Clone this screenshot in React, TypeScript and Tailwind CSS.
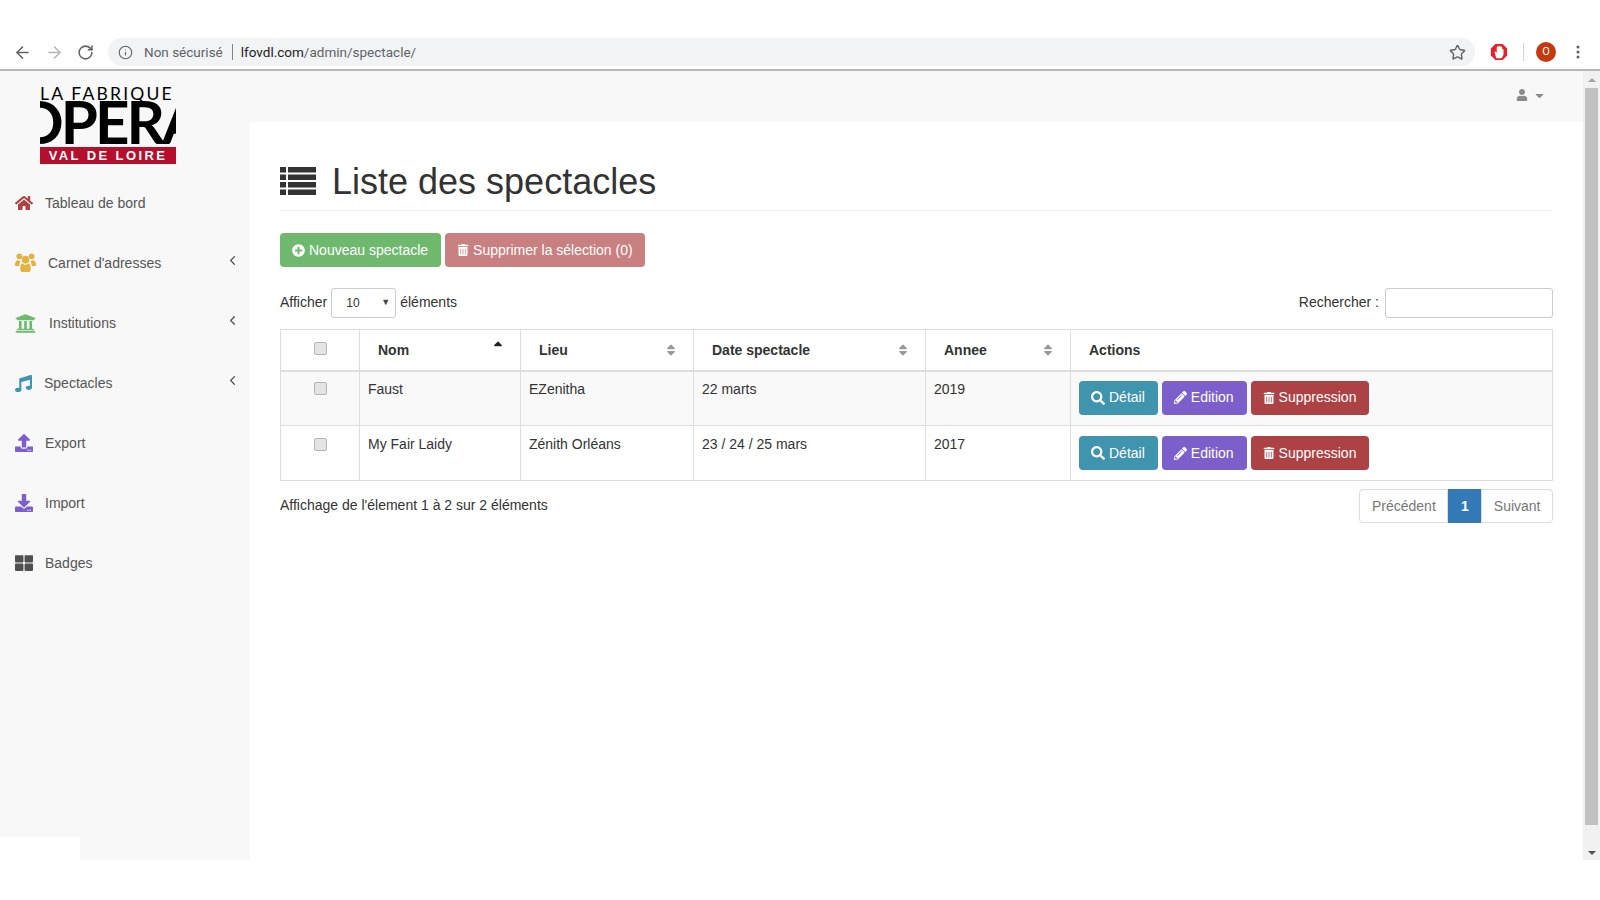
import React from "react";
import {
  FaHome, FaUniversity, FaMusic, FaUpload, FaDownload, FaThLarge,
  FaPlusCircle, FaTrashAlt, FaSearch, FaPencilAlt, FaUser, FaSort, FaSortUp, FaCaretDown,
} from "react-icons/fa";
import { ArrowLeft, ArrowRight, RotateCw, Info, Star, ChevronLeft } from "lucide-react";

const font = { fontFamily: '"Liberation Sans", Arial, sans-serif' };

function UsersIcon({ size, className }: { size?: number; className?: string }) {
  return (
    <svg viewBox="0 0 22 20" width={size} height={(size ?? 22) * 20 / 22} className={className} fill="currentColor">
      <circle cx="4.5" cy="3.5" r="3" />
      <circle cx="17.5" cy="3.5" r="3" />
      <path d="M0 13 C0 9 1.5 7.5 3.5 7.5 C4.5 8.3 5.2 8.5 6 8.5 C5 10 4.5 11.5 4.6 13.5 L1 13.5 C.3 13.5 0 13.3 0 13 Z" />
      <path d="M22 13 C22 9 20.5 7.5 18.5 7.5 C17.5 8.3 16.8 8.5 16 8.5 C17 10 17.5 11.5 17.4 13.5 L21 13.5 C21.7 13.5 22 13.3 22 13 Z" />
      <circle cx="11" cy="7" r="4" />
      <path d="M5.5 17 C5.5 13 6.5 11 8 11 C9 12 10 12.3 11 12.3 C12 12.3 13 12 14 11 C15.5 11 16.5 13 16.5 17 C16.5 19 15 20 14 20 L8 20 C7 20 5.5 19 5.5 17 Z" />
    </svg>
  );
}

function ListIcon() {
  return (
    <svg viewBox="0 0 36 28" className="w-[36px] h-[28px] shrink-0 fill-[#333] -mt-[5px]">
      <rect x="0" y="0" width="6" height="5.5" /><rect x="8" y="0" width="28" height="5.5" />
      <rect x="0" y="7.5" width="6" height="5.5" /><rect x="8" y="7.5" width="28" height="5.5" />
      <rect x="0" y="15" width="6" height="5.5" /><rect x="8" y="15" width="28" height="5.5" />
      <rect x="0" y="22.5" width="6" height="5.5" /><rect x="8" y="22.5" width="28" height="5.5" />
    </svg>
  );
}

function ChromeBar() {
  return (
    <div className="h-[71px] shrink-0 bg-white border-b-2 border-[#b8b8b8] flex items-end pb-[3px] pl-[12px] pr-[20px]">
      <div className="flex items-center h-[28px] w-full">
        <ArrowLeft size={19} strokeWidth={2} className="text-[#5f6368] ml-[1px]" />
        <ArrowRight size={19} strokeWidth={2} className="text-[#b4b6b8] ml-[13px]" />
        <RotateCw size={17} strokeWidth={2.2} className="text-[#5f6368] ml-[13px]" />
        <div className="ml-[14px] flex-1 h-[28px] rounded-full bg-[#f1f3f4] flex items-center pl-[10px] pr-[9px]" style={{ fontFamily: "Roboto, sans-serif" }}>
          <Info size={15} strokeWidth={1.8} className="text-[#5f6368]" />
          <span className="ml-[11px] text-[13.5px] text-[#5f6368]">Non sécurisé</span>
          <span className="ml-[9px] w-px h-[16px] bg-[#80868b]" />
          <span className="ml-[8px] text-[13.5px] text-[#202124]">lfovdl.com</span>
          <span className="text-[13.5px] text-[#5f6368]">/admin/spectacle/</span>
          <Star size={17} strokeWidth={2} className="ml-auto text-[#5f6368]" />
        </div>
        <svg viewBox="0 0 20 20" className="w-[18px] h-[18px] ml-[15px]">
          <polygon points="6,1 14,1 19,6 19,14 14,19 6,19 1,14 1,6" fill="#e8202a" />
          <path d="M7 17 L5 10 L6.5 9.5 L7.5 11 V5 a1 1 0 0 1 2 0 V4 a1 1 0 0 1 2 0 V5 a1 1 0 0 1 2 0 V7 a1 1 0 0 1 1.5 0 V13 L13 17 Z" fill="#fff" />
        </svg>
        <span className="ml-[15px] w-px h-[18px] bg-[#d5d5d5]" />
        <div className="ml-[12px] w-[20px] h-[20px] rounded-full bg-[#c43a0c] text-white text-[11px] flex items-center justify-center" style={{ fontFamily: "Roboto, sans-serif" }}>O</div>
        <svg viewBox="0 0 4 14" className="w-[4px] h-[14px] ml-[20px] fill-[#5f6368]">
          <circle cx="2" cy="2" r="1.5" /><circle cx="2" cy="7" r="1.5" /><circle cx="2" cy="12" r="1.5" />
        </svg>
      </div>
    </div>
  );
}

function Logo() {
  return (
    <div className="ml-[40px] mt-[15px] w-[136px] h-[78px] overflow-hidden flex flex-col text-black" style={{ fontFamily: "Lato, sans-serif" }}>
      <div className="h-[14px] text-[17.5px] leading-[16px] tracking-[2.2px] whitespace-nowrap font-normal">LA FABRIQUE</div>
      <div className="h-[46px] w-[136px] overflow-hidden flex justify-center">
        <span className="text-[60px] leading-[42px] tracking-[-3px] whitespace-nowrap shrink-0 font-bold">OPERA</span>
      </div>
      <div className="mt-[1px] h-[17px] bg-[#b40f2d] text-white text-[13px] font-bold tracking-[2.4px] leading-[17px] text-center whitespace-nowrap" style={font}>VAL DE LOIRE</div>
    </div>
  );
}

const nav = [
  { label: "Tableau de bord", Icon: FaHome, color: "text-[#ad4244]", size: 18, gap: "ml-[12px]", arrow: false },
  { label: "Carnet d'adresses", Icon: UsersIcon, color: "text-[#e3b341]", size: 21, gap: "ml-[12px]", arrow: true },
  { label: "Institutions", Icon: FaUniversity, color: "text-[#6fb96f]", size: 21, gap: "ml-[13px]", arrow: true },
  { label: "Spectacles", Icon: FaMusic, color: "text-[#3f94ae]", size: 17, gap: "ml-[12px]", arrow: true },
  { label: "Export", Icon: FaUpload, color: "text-[#7c5fca]", size: 18, gap: "ml-[12px]", arrow: false },
  { label: "Import", Icon: FaDownload, color: "text-[#7c5fca]", size: 18, gap: "ml-[12px]", arrow: false },
  { label: "Badges", Icon: FaThLarge, color: "text-[#4f4f4f]", size: 18, gap: "ml-[12px]", arrow: false },
];

function Sidebar() {
  return (
    <aside className="relative w-[250px] shrink-0 bg-[#f8f8f8] flex flex-col">
      <Logo />
      <nav className="mt-[9px] flex flex-col">
        {nav.map(({ label, Icon, color, size, gap, arrow }) => (
          <div key={label} className="h-[60px] flex items-center pl-[15px] pr-[10px] text-[14px] text-[#555]">
            <Icon size={size} className={color} />
            <span className={gap + " flex-1"}>{label}</span>
            {arrow && <ChevronLeft size={15} strokeWidth={2.1} className="text-[#555] -mt-[5px]" />}
          </div>
        ))}
      </nav>
      <div className="absolute left-0 bottom-0 w-[80px] h-[23px] bg-white" />
    </aside>
  );
}

function Btn({ color, Icon, children, size = 13, pr = "pr-[13px]" }: { color: string; Icon: React.ComponentType<{ size?: number }>; children: React.ReactNode; size?: number; pr?: string }) {
  return (
    <button className={`${color} ${pr} h-[34px] pl-[12px] rounded-[4px] text-white text-[14px] flex items-center gap-[4px] whitespace-nowrap`}>
      <Icon size={size} />
      {children}
    </button>
  );
}

function SortTh({ label, icon }: { label: string; icon: "up" | "both" }) {
  return (
    <th className="border-l border-[#dddddd] text-left font-bold pl-[18px] pr-[15px] p-0 align-middle">
      <div className="flex items-center justify-between pt-[1px]">
        <span>{label}</span>
        {icon === "up" ? <FaSortUp size={14} className="text-[#222] -mt-[6px]" /> : <FaSort size={14} className="text-[#999]" />}
      </div>
    </th>
  );
}

const rows = [
  { nom: "Faust", lieu: "EZenitha", date: "22 marts", annee: "2019", bg: "bg-[#f9f9f9]" },
  { nom: "My Fair Laidy", lieu: "Zénith Orléans", date: "23 / 24 / 25 mars", annee: "2017", bg: "bg-white" },
];

const check = "appearance-none block w-[13px] h-[13px] bg-[#e4e4e4] border border-[#b4b4b4] rounded-[2px]";

function Main() {
  return (
    <div className="flex-1 flex flex-col min-w-0">
      <div className="h-[51px] shrink-0 bg-[#f8f8f8] flex justify-end items-center gap-[5px] pr-[37px] pb-[3px] text-[#8a8a8a]">
        <FaUser size={12} />
        <FaCaretDown size={13} />
      </div>
      <main className="flex-1 bg-white pl-[30px] pr-[30px] text-[14px] text-[#333]">
        <div className="h-[89px] border-b border-[#eeeeee] flex items-center pt-[34px] gap-[16px]">
          <ListIcon />
          <h1 className="text-[36px] leading-[40px] font-normal -mt-[3px]">Liste des spectacles</h1>
        </div>
        <div className="mt-[22px] flex gap-[4px]">
          <Btn color="bg-[#6fb96f]" Icon={FaPlusCircle}>Nouveau spectacle</Btn>
          <Btn color="bg-[#c98080]" Icon={FaTrashAlt} size={12} pr="pr-[12px]">Supprimer la sélection (0)</Btn>
        </div>
        <div className="mt-[21px] h-[30px] flex items-center">
          <span className="-mt-[2px]">Afficher</span>
          <div className="ml-[4px] w-[65px] h-[30px] border border-[#cccccc] rounded-[3px] flex items-center justify-between pl-[14px] pr-[5px] text-[12px]">
            <span>10</span>
            <span className="text-[9px] text-[#444]">▼</span>
          </div>
          <span className="ml-[4px] -mt-[2px]">éléments</span>
          <span className="ml-auto -mt-[2px]">Rechercher :</span>
          <div className="ml-[6px] w-[168px] h-[30px] border border-[#cccccc] rounded-[3px] bg-white" />
        </div>
        <table className="mt-[11px] w-full table-fixed border-collapse border border-[#dddddd] text-[14px]">
          <colgroup>
            <col className="w-[79px]" /><col className="w-[161px]" /><col className="w-[173px]" />
            <col className="w-[232px]" /><col className="w-[145px]" /><col />
          </colgroup>
          <thead>
            <tr className="h-[41px] border-b-2 border-[#dddddd]">
              <th className="p-0"><input type="checkbox" className={check + " mx-auto -mt-[3px]"} /></th>
              <SortTh label="Nom" icon="up" />
              <SortTh label="Lieu" icon="both" />
              <SortTh label="Date spectacle" icon="both" />
              <SortTh label="Annee" icon="both" />
              <th className="border-l border-[#dddddd] text-left font-bold pl-[18px] pt-[1px]">Actions</th>
            </tr>
          </thead>
          <tbody>
            {rows.map((r, i) => (
              <tr key={r.nom} className={r.bg + " h-[55px] border-b border-[#dddddd]"}>
                <td className={(i === 0 ? "pt-[10px]" : "pt-[12px]") + " align-top"}><input type="checkbox" className={check + " mx-auto"} /></td>
                <td className={(i === 0 ? "pt-[7px]" : "pt-[8px]") + " align-top px-[8px] border-l border-[#dddddd]"}>{r.nom}</td>
                <td className={(i === 0 ? "pt-[7px]" : "pt-[8px]") + " align-top px-[8px] border-l border-[#dddddd]"}>{r.lieu}</td>
                <td className={(i === 0 ? "pt-[7px]" : "pt-[8px]") + " align-top px-[8px] border-l border-[#dddddd]"}>{r.date}</td>
                <td className={(i === 0 ? "pt-[7px]" : "pt-[8px]") + " align-top px-[8px] border-l border-[#dddddd]"}>{r.annee}</td>
                <td className={(i === 0 ? "pt-[9px]" : "pt-[10px]") + " align-top pl-[8px] border-l border-[#dddddd]"}>
                  <div className="flex gap-[4px]">
                    <Btn color="bg-[#3f94ae]" Icon={FaSearch} size={14}>Détail</Btn>
                    <Btn color="bg-[#7c5fca]" Icon={FaPencilAlt}>Edition</Btn>
                    <Btn color="bg-[#ad4244]" Icon={FaTrashAlt} size={12}>Suppression</Btn>
                  </div>
                </td>
              </tr>
            ))}
          </tbody>
        </table>
        <div className="mt-[8px] flex justify-between items-start">
          <span className="mt-[6px]">Affichage de l'élement 1 à 2 sur 2 éléments</span>
          <div className="flex h-[34px] text-[#777]">
            <span className="px-[11.5px] border border-[#dddddd] rounded-l-[4px] flex items-center">Précédent</span>
            <span className="w-[33px] bg-[#337ab7] text-white font-bold flex items-center justify-center">1</span>
            <span className="px-[11.5px] border border-[#dddddd] rounded-r-[4px] flex items-center">Suivant</span>
          </div>
        </div>
      </main>
    </div>
  );
}

function Scrollbar() {
  return (
    <div className="w-[17px] shrink-0 bg-[#f1f1f1] flex flex-col items-center">
      <div className="h-[17px] shrink-0 flex items-center justify-center">
        <span className="w-0 h-0 border-x-[4px] border-x-transparent border-b-[4px] border-b-[#a3a3a3]" />
      </div>
      <div className="w-[13px] h-[737px] bg-[#c1c1c1]" />
      <div className="flex-1 flex items-end justify-center pb-[5px]">
        <span className="w-0 h-0 border-x-[4px] border-x-transparent border-t-[4px] border-t-[#505050]" />
      </div>
    </div>
  );
}

export default function App() {
  return (
    <div className="w-[1600px] h-[900px] bg-white flex flex-col overflow-hidden" style={font}>
      <ChromeBar />
      <div className="h-[789px] flex shrink-0">
        <Sidebar />
        <Main />
        <Scrollbar />
      </div>
    </div>
  );
}
